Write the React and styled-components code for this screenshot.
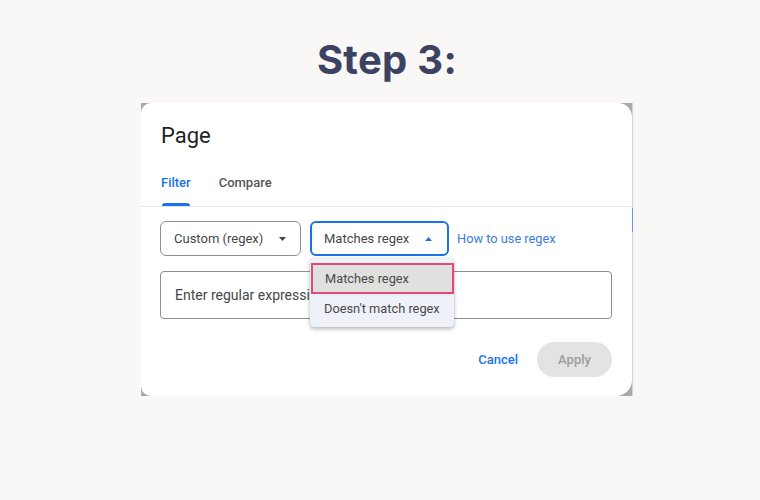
import React from 'react';
import styled, { createGlobalStyle } from 'styled-components';

const Global = createGlobalStyle`
  html, body { margin: 0; padding: 0; background: #f9f8f6; }
  body { width: 760px; height: 500px; overflow: hidden; font-family: Roboto, "Liberation Sans", Arial, sans-serif; }
  * { box-sizing: border-box; }
`;

const Screen = styled.div`
  width: 760px;
  height: 500px;
  display: flex;
  flex-direction: column;
  align-items: center;
  padding-top: 36px;
  padding-left: 14px;
`;

const Heading = styled.h1`
  margin: 0;
  font-family: Inter, "Open Sans", sans-serif;
  font-weight: 700;
  font-size: 40px;
  line-height: 48px;
  color: #3b4262;
  letter-spacing: 0.3px;
`;

const Frame = styled.div`
  position: relative;
  margin-top: 19px;
  width: 492px;
  display: flex;
  background: #a9a9a9;
  border-right: 1px solid #d4d4d4;
`;

const EdgeMark = styled.div`
  position: absolute;
  right: -1px;
  top: 105px;
  width: 1px;
  height: 24px;
  background: #6b97e6;
`;

const Dialog = styled.div`
  flex: 1;
  background: #fff;
  border-radius: 10px 14px 16px 10px;
  padding: 19px 20px 19px 19px;
  display: flex;
  flex-direction: column;
`;

const Title = styled.div`
  font-size: 22px;
  line-height: 28px;
  color: #1f1f1f;
  padding-left: 1px;
`;

const TabBar = styled.div`
  margin: 23px -20px 0 -19px;
  padding-left: 20px;
  display: flex;
  gap: 28px;
  border-bottom: 1px solid #e6e6e6;
`;

const Tab = styled.div`
  position: relative;
  font-size: 13px;
  font-weight: 500;
  line-height: 20px;
  padding-bottom: 13px;
  color: ${p => (p.$active ? '#1a73e8' : '#555759')};
  &::after {
    content: '';
    display: ${p => (p.$active ? 'block' : 'none')};
    position: absolute;
    left: 1px;
    right: 1px;
    bottom: 0;
    height: 3px;
    border-radius: 3px 3px 0 0;
    background: #1a73e8;
  }
`;

const Controls = styled.div`
  margin-top: 14px;
  display: flex;
  align-items: center;
`;

const SelectBox = styled.div`
  position: relative;
  width: ${p => p.$w}px;
  height: 35px;
  margin-right: ${p => p.$mr}px;
  display: flex;
  align-items: center;
  justify-content: space-between;
  border-radius: 6px;
  border: ${p => (p.$focused ? '2px solid #1a73e8' : '1px solid #8f8f8f')};
  padding: 0 ${p => (p.$focused ? 15 : 14)}px 0 ${p => (p.$focused ? 12 : 13)}px;
  font-size: 13px;
  color: #444746;
`;

const Caret = styled.svg`
  width: 7px;
  height: 4px;
  display: block;
  transform: ${p => (p.$up ? 'rotate(180deg)' : 'none')};
  fill: ${p => (p.$up ? '#1a73e8' : '#444746')};
`;

const Link = styled.span`
  font-size: 12.8px;
  color: #3a7be6;
`;

const Menu = styled.div`
  position: absolute;
  left: -2px;
  top: 35px;
  width: 144px;
  padding: 5px 0;
  background: #eef1f8;
  border-radius: 4px;
  box-shadow: 0 2px 4px rgba(0, 0, 0, 0.28), 0 0 1px rgba(0, 0, 0, 0.2);
  z-index: 2;
`;

const MenuItem = styled.div`
  height: ${p => (p.$selected ? 31 : 28)}px;
  display: flex;
  align-items: center;
  padding-left: ${p => (p.$selected ? 12 : 14)}px;
  font-size: 12.8px;
  color: #4a4a4a;
  background: ${p => (p.$selected ? '#e0e0de' : 'transparent')};
  border: ${p => (p.$selected ? '2px solid #e8457b' : 'none')};
  margin-left: ${p => (p.$selected ? 1 : 0)}px;
`;

const Input = styled.div`
  margin-top: 15px;
  height: 48px;
  border: 1px solid #8f8f8f;
  border-radius: 4px;
  display: flex;
  align-items: center;
  padding-left: 14px;
  font-size: 14px;
  color: #444746;
`;

const Footer = styled.div`
  margin-top: 23px;
  display: flex;
  justify-content: flex-end;
  align-items: center;
  gap: 19px;
`;

const TextButton = styled.span`
  font-size: 13px;
  font-weight: 500;
  color: #1a73e8;
`;

const Pill = styled.div`
  width: 75px;
  height: 35px;
  border-radius: 18px;
  background: #e3e3e3;
  color: #9d9d9d;
  font-size: 13px;
  font-weight: 500;
  display: flex;
  align-items: center;
  justify-content: center;
`;

const Tri = ({ up }) => (
  <Caret $up={up} viewBox="0 0 7 4">
    <path d="M0 0 L7 0 L3.5 4 Z" />
  </Caret>
);

export default function App() {
  return (
    <>
      <Global />
      <Screen>
        <Heading>Step 3:</Heading>
        <Frame>
          <Dialog>
            <Title>Page</Title>
            <TabBar>
              <Tab $active>Filter</Tab>
              <Tab>Compare</Tab>
            </TabBar>
            <Controls>
              <SelectBox $w={141} $mr={9}>
                <span>Custom (regex)</span>
                <Tri />
              </SelectBox>
              <SelectBox $w={139} $mr={8} $focused>
                <span>Matches regex</span>
                <Tri up />
                <Menu>
                  <MenuItem $selected>Matches regex</MenuItem>
                  <MenuItem>Doesn't match regex</MenuItem>
                </Menu>
              </SelectBox>
              <Link>How to use regex</Link>
            </Controls>
            <Input>Enter regular expression</Input>
            <Footer>
              <TextButton>Cancel</TextButton>
              <Pill>Apply</Pill>
            </Footer>
          </Dialog>
          <EdgeMark />
        </Frame>
      </Screen>
    </>
  );
}
